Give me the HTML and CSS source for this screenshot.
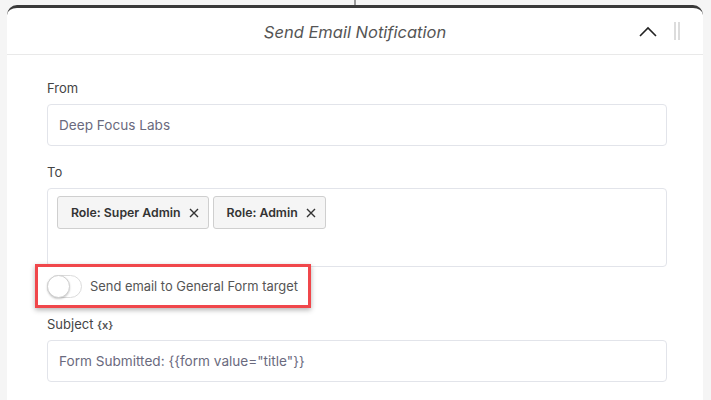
FILE: index.html
```html
<!DOCTYPE html>
<html>
<head>
<meta charset="utf-8">
<link rel="stylesheet" href="styles.css">
</head>
<body>
<div class="canvas">
  <div class="connector"></div>
  <div class="card">
    <div class="header">
      <div class="title">Send Email Notification</div>
      <div class="actions">
        <svg class="chevron" width="18" height="11" viewBox="0 0 18 11"><path d="M1 10 L9 2 L17 10" fill="none" stroke="#222" stroke-width="1.6"/></svg>
        <div class="handle"><span></span><span></span></div>
      </div>
    </div>
    <div class="body">
      <div class="field">
        <label class="label">From</label>
        <div class="input">Deep Focus Labs</div>
      </div>
      <div class="field">
        <label class="label">To</label>
        <div class="tagbox">
          <span class="tag">Role: Super Admin <svg class="x" width="10" height="10" viewBox="0 0 10 10"><path d="M1 1 L9 9 M9 1 L1 9" stroke="#333" stroke-width="1.4"/></svg></span>
          <span class="tag">Role: Admin <svg class="x" width="10" height="10" viewBox="0 0 10 10"><path d="M1 1 L9 9 M9 1 L1 9" stroke="#333" stroke-width="1.4"/></svg></span>
        </div>
      </div>
      <div class="toggle-row">
        <span class="switch"><span class="knob"></span></span>
        <span class="toggle-text">Send email to General Form target</span>
      </div>
      <div class="field subject">
        <label class="label">Subject <span class="var">{x}</span></label>
        <div class="input">Form Submitted: {{form value="title"}}</div>
      </div>
    </div>
  </div>
</div>
</body>
</html>
```
FILE: styles.css
```css
* { box-sizing: border-box; }
html, body {
  margin: 0;
  padding: 0;
  background: #f5f5f5;
  font-family: Inter, "Noto Sans", sans-serif;
  height: 400px;
  overflow: hidden;
}
.canvas {
  display: flex;
  flex-direction: column;
  align-items: stretch;
}
.connector {
  width: 2px;
  height: 5px;
  background: #9a9a9a;
  margin-left: 354px;
}
.card {
  margin: 0 8px 0 7px;
  background: #fff;
  border-top: 3px solid #3a3a3a;
  border-radius: 10px 10px 0 0;
  height: 400px;
}
.header {
  height: 47px;
  border-bottom: 1px solid #e9e9e9;
  display: flex;
  align-items: center;
  justify-content: center;
  position: relative;
}
.title {
  font-style: italic;
  font-size: 16.5px;
  color: #555;
  margin-top: 2px;
}
.actions {
  position: absolute;
  right: 23px;
  top: 14px;
  display: flex;
  align-items: center;
  gap: 17px;
}
.chevron { display: block; margin-top: 1px; }
.handle {
  display: flex;
  gap: 2px;
  height: 18px;
}
.handle span {
  width: 2px;
  background: #dcdcdc;
}
.body {
  padding: 25px 36px 0 40px;
}
.field {
  display: flex;
  flex-direction: column;
}
.label {
  font-size: 13px;
  color: #444;
  height: 16px;
  line-height: 16px;
  margin-bottom: 8px;
}
.input {
  height: 42px;
  border: 1px solid #e2e4ea;
  border-radius: 4px;
  padding: 0 11px;
  display: flex;
  align-items: center;
  font-size: 13.6px;
  color: #6a6a7e;
  margin-bottom: 18px;
}
.tagbox {
  height: 79px;
  border: 1px solid #e2e4ea;
  border-radius: 4px;
  padding: 7px 9px;
  display: flex;
  align-items: flex-start;
  gap: 4px;
}
.tag {
  height: 33px;
  border: 1px solid #cfcfcf;
  border-radius: 3px;
  background: #f5f5f5;
  display: inline-flex;
  align-items: center;
  padding: 0 9px 0 13px;
  font-size: 12.3px;
  font-weight: 600;
  color: #333;
  gap: 8px;
}
.tag .x { display: block; }
.toggle-row {
  display: inline-flex;
  align-items: center;
  align-self: flex-start;
  height: 44px;
  border: 3px solid #f0474b;
  box-shadow: 0 2px 5px rgba(0,0,0,0.3);
  margin: -3px 0 0 -12px;
  padding: 0 10px 0 9px;
  gap: 8px;
  white-space: nowrap;
}
.switch {
  width: 35px;
  height: 23px;
  border: 1px solid #dcdcdc;
  border-radius: 12px;
  background: #fff;
  position: relative;
  flex: none;
}
.knob {
  position: absolute;
  left: -1px;
  top: -1px;
  width: 23px;
  height: 23px;
  border-radius: 50%;
  background: #fff;
  border: 1px solid #cfcfcf;
  box-shadow: 0 1px 2px rgba(0,0,0,0.2);
}
.toggle-text {
  font-size: 12.9px;
  color: #555;
}
.subject { margin-top: 8px; }
.var {
  font-size: 11px;
  font-weight: 600;
  color: #555;
}
```
